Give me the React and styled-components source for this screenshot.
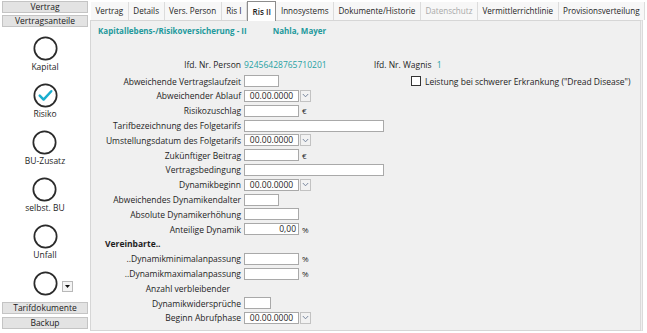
import React from 'react';
import styled, { createGlobalStyle } from 'styled-components';

const GlobalStyle = createGlobalStyle`
  html, body {
    margin: 0;
    padding: 0;
    background: #ffffff;
  }
  body {
    font-family: "Open Sans", "Noto Sans", sans-serif;
    font-size: 8.5px;
    color: #1e1e1e;
  }
`

const Screen = styled.div`
  display: flex;
  width: 647px;
  height: 333px;
  overflow: hidden;
`

/* ---------- left column ---------- */

const Sidebar = styled.div`
  width: 90px;
  height: 333px;
  flex-shrink: 0;
  display: flex;
  flex-direction: column;
  padding-top: 1px;
  box-sizing: border-box;
`
const SideButton = styled.div`
  height: 10px;
  margin: 0 2px ${(props) => (props.gap === undefined ? 2 : props.gap)}px 2px;
  border: 1px solid #c4c4c4;
  background: #e3e3e3;
  text-align: center;
  line-height: 10px;
  font-size: 8.5px;
  color: #1a1a1a;
`
const Anteile = styled.div`
  display: flex;
  flex-direction: column;
  padding-top: 7px;
  gap: 11px;
`
const Anteil = styled.div`
  display: grid;
  grid-template-columns: 1fr auto 1fr;
  justify-items: center;
  align-items: center;
`
const AnteilBody = styled.div`
  grid-column: 2;
  display: flex;
  flex-direction: column;
  align-items: center;
  gap: 1px;
`
const AnteilLabel = styled.div`
  font-size: 8.5px;
  height: 10px;
  line-height: 10px;
  color: #1e1e1e;
`
const MiniDrop = styled.div`
  grid-column: 3;
  justify-self: start;
  margin-left: 4px;
  margin-top: 6px;
  width: 9px;
  height: 9px;
  border: 1px solid #b8b8b8;
  background: #f4f4f4;
  display: flex;
  align-items: center;
  justify-content: center;
`
const SideFooter = styled.div`
  margin-top: auto;
  padding-bottom: 4px;
`

const Ring = ({ checked }) => (
  <svg width="25" height="25" viewBox="0 0 26 26" style={{ display: 'block' }}>
    <circle cx="13" cy="13" r="11.6" fill="none" stroke="#2b2b2b" strokeWidth="1.8" />
    {checked && (
      <path d="M7 13.2 L11 17.2 L19 8.6" fill="none" stroke="#19aecf" strokeWidth="2.6" strokeLinecap="round" strokeLinejoin="round" />
    )}
  </svg>
)

/* ---------- tabs and panel ---------- */

const Main = styled.div`
  flex: 1;
  display: flex;
  flex-direction: column;
  padding-right: 4px;
  padding-bottom: 2px;
  min-width: 0;
`
const TabStrip = styled.div`
  display: flex;
  height: 20px;
  align-items: flex-end;
  padding-left: 1px;
`
const Tab = styled.div`
  height: 18px;
  line-height: 18px;
  padding: 0 4.5px;
  font-size: 8.1px;
  white-space: nowrap;
  border-right: 1px solid #dcdcdc;
  background: ${(props) => (props.active ? '#ffffff' : '#f7f7f7')};
  color: ${(props) => (props.disabled ? '#a8a8a8' : '#1e1e1e')};
  font-weight: ${(props) => (props.active ? 600 : 400)};
  ${(props) => props.active && `
    height: 20px;
    line-height: 19px;
    border: 1px solid #8c8c8c;
    border-bottom: none;
    box-sizing: border-box;
    margin-bottom: -1px;
    position: relative;
    z-index: 1;
  `}
`
const Panel = styled.div`
  flex: 1;
  background: #f0f0f0;
  border: 1px solid #d6d6d6;
  border-right: 3px double #dadada;
  display: flex;
  flex-direction: column;
`
const TitleRow = styled.div`
  display: flex;
  height: 18px;
  align-items: center;
  padding-left: 7px;
  font-weight: 700;
  font-size: 8px;
  color: #23999c;
`
const Customer = styled.span`
  margin-left: 26px;
`

const Form = styled.div`
  display: grid;
  grid-template-columns: 148px 167px 1fr;
  grid-template-rows: 17.8px;
  grid-auto-rows: 14.81px;
  column-gap: 3px;
  align-items: center;
  padding-left: 2px;
  margin-top: 17px;
`
const Label = styled.div`
  grid-column: 1;
  text-align: right;
  white-space: nowrap;
  padding-right: ${(props) => props.pr || 0}px;
`
const Field = styled.div`
  grid-column: ${(props) => (props.span ? '2 / 4' : '2')};
  display: flex;
  align-items: center;
  gap: 3px;
  white-space: nowrap;
`
const Value = styled.span`
  color: #27a1a3;
  width: ${(props) => props.w || 'auto'};
`
const Input = styled.div`
  width: ${(props) => props.w}px;
  height: 12px;
  box-sizing: border-box;
  background: #ffffff;
  border: 1px solid #a9a9a9;
  line-height: 10px;
  text-align: ${(props) => props.align || 'left'};
  padding: 0 2px;
`
const DateBox = styled.div`
  display: flex;
  gap: 1px;
`
const DropBtn = styled.div`
  width: 11px;
  height: 12px;
  box-sizing: border-box;
  border: 1px solid #c2c2c2;
  background: #f2f2f2;
  display: flex;
  align-items: center;
  justify-content: center;
`
const Unit = styled.span`
  font-size: 8px;
`
const Extra = styled.div`
  grid-column: 3;
  display: flex;
  align-items: center;
  gap: 4px;
  margin-left: -3px;
  white-space: nowrap;
`
const Box = styled.div`
  width: 10px;
  height: 10px;
  box-sizing: border-box;
  border: 1px solid #333333;
  background: #ffffff;
`
const Section = styled.div`
  grid-column: 1 / 4;
  padding-left: 12px;
  font-weight: 700;
`

const Chevron = () => (
  <svg width="7" height="5" viewBox="0 0 7 5">
    <polyline points="0.8,1 3.5,3.8 6.2,1" fill="none" stroke="#6b7c95" strokeWidth="0.9" />
  </svg>
)

const DateInput = () => (
  <DateBox>
    <Input w={55} align="center">00.00.0000</Input>
    <DropBtn><Chevron /></DropBtn>
  </DateBox>
)

const tabs = [
  { name: 'Vertrag' },
  { name: 'Details' },
  { name: 'Vers. Person' },
  { name: 'Ris I' },
  { name: 'Ris II', active: true },
  { name: 'Innosystems' },
  { name: 'Dokumente/Historie' },
  { name: 'Datenschutz', disabled: true },
  { name: 'Vermittlerrichtlinie' },
  { name: 'Provisionsverteilung' },
]

const anteile = [
  { name: 'Kapital' },
  { name: 'Risiko', checked: true },
  { name: 'BU-Zusatz' },
  { name: 'selbst. BU' },
  { name: 'Unfall' },
]

const App = () => {
  return (
    <>
      <GlobalStyle />
      <Screen>
        <Sidebar>
          <SideButton>Vertrag</SideButton>
          <SideButton>Vertragsanteile</SideButton>
          <Anteile>
            {anteile.map((a) => (
              <Anteil key={a.name}>
                <AnteilBody>
                  <Ring checked={a.checked} />
                  <AnteilLabel>{a.name}</AnteilLabel>
                </AnteilBody>
              </Anteil>
            ))}
            <Anteil>
              <AnteilBody>
                <Ring />
              </AnteilBody>
              <MiniDrop>
                <svg width="5" height="3" viewBox="0 0 5 3">
                  <polygon points="0,0 5,0 2.5,3" fill="#111" />
                </svg>
              </MiniDrop>
            </Anteil>
          </Anteile>
          <SideFooter>
            <SideButton gap={3}>Tarifdokumente</SideButton>
            <SideButton gap={0}>Backup</SideButton>
          </SideFooter>
        </Sidebar>

        <Main>
          <TabStrip>
            {tabs.map((t) => (
              <Tab key={t.name} active={t.active} disabled={t.disabled}>{t.name}</Tab>
            ))}
          </TabStrip>
          <Panel>
            <TitleRow>
              Kapitallebens-/Risikoversicherung - II
              <Customer>Nahla, Mayer</Customer>
            </TitleRow>

            <Form>
              <Label>lfd. Nr. Person</Label>
              <Field span>
                <Value w="127px">92456428765710201</Value>
                <span>lfd. Nr. Wagnis</span>
                <Value>&nbsp;1</Value>
              </Field>

              <Label>Abweichende Vertragslaufzeit</Label>
              <Field><Input w={35} /></Field>
              <Extra>
                <Box />
                Leistung bei schwerer Erkrankung ("Dread Disease")
              </Extra>

              <Label>Abweichender Ablauf</Label>
              <Field><DateInput /></Field>

              <Label>Risikozuschlag</Label>
              <Field><Input w={55} /><Unit>€</Unit></Field>

              <Label>Tarifbezeichnung des Folgetarifs</Label>
              <Field><Input w={140} /></Field>

              <Label>Umstellungsdatum des Folgetarifs</Label>
              <Field><DateInput /></Field>

              <Label>Zukünftiger Beitrag</Label>
              <Field><Input w={55} /><Unit>€</Unit></Field>

              <Label>Vertragsbedingung</Label>
              <Field><Input w={140} /></Field>

              <Label>Dynamikbeginn</Label>
              <Field><DateInput /></Field>

              <Label>Abweichendes Dynamikendalter</Label>
              <Field><Input w={35} /></Field>

              <Label>Absolute Dynamikerhöhung</Label>
              <Field><Input w={55} /></Field>

              <Label>Anteilige Dynamik</Label>
              <Field><Input w={55} align="right">0,00</Input><Unit>%</Unit></Field>

              <Section>Vereinbarte..</Section>

              <Label>..Dynamikminimalanpassung</Label>
              <Field><Input w={55} /><Unit>%</Unit></Field>

              <Label>..Dynamikmaximalanpassung</Label>
              <Field><Input w={55} /><Unit>%</Unit></Field>

              <Label pr={11}>Anzahl verbleibender</Label>
              <Field />

              <Label>Dynamikwidersprüche</Label>
              <Field><Input w={27} /></Field>

              <Label>Beginn Abrufphase</Label>
              <Field><DateInput /></Field>
            </Form>
          </Panel>
        </Main>
      </Screen>
    </>
  );
};

export default App;
